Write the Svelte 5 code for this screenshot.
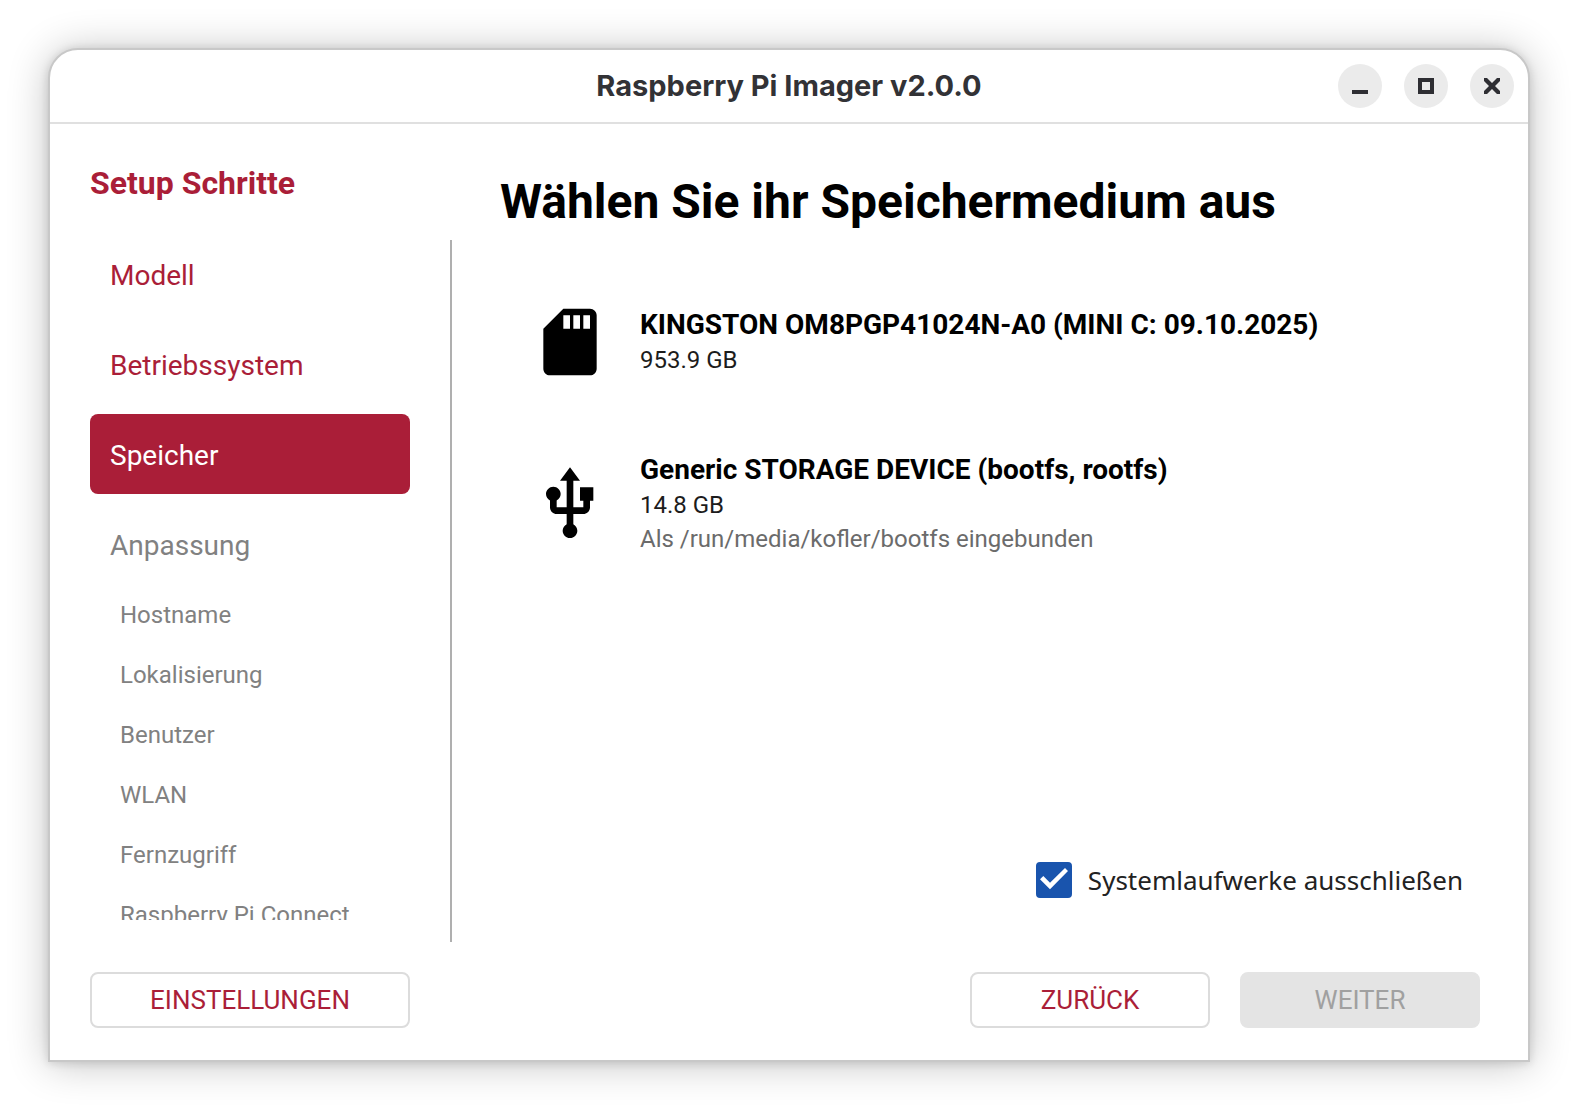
<script>
  let current = $state("Speicher");
  let excludeSystem = $state(true);

  const steps = [
    { name: "Modell", enabled: true },
    { name: "Betriebssystem", enabled: true },
    { name: "Speicher", enabled: true },
    {
      name: "Anpassung",
      enabled: false,
      children: [
        "Hostname",
        "Lokalisierung",
        "Benutzer",
        "WLAN",
        "Fernzugriff",
        "Raspberry Pi Connect",
      ],
    },
  ];

  const devices = [
    {
      icon: "sd",
      name: "KINGSTON OM8PGP41024N-A0 (MINI C: 09.10.2025)",
      size: "953.9 GB",
    },
    {
      icon: "usb",
      name: "Generic STORAGE DEVICE (bootfs, rootfs)",
      size: "14.8 GB",
      mount: "Als /run/media/kofler/bootfs eingebunden",
    },
  ];
</script>

<div class="desktop">
  <div class="window">
    <header class="titlebar">
      <h1>Raspberry Pi Imager v2.0.0</h1>
      <div class="controls">
        <button aria-label="Minimieren">
          <svg viewBox="0 0 16 16"><path d="M0 12h16v4H0z" /></svg>
        </button>
        <button aria-label="Maximieren">
          <svg viewBox="0 0 16 16"><path fill-rule="evenodd" d="M0 0h16v16H0zM4 4v8h8V4z" /></svg>
        </button>
        <button aria-label="Schließen">
          <svg viewBox="0 0 16 16">
            <path d="M0 0h3l5 5 5-5h3v3l-5 5 5 5v3h-3l-5-5-5 5H0v-3l5-5-5-5z" />
          </svg>
        </button>
      </div>
    </header>

    <div class="content">
      <aside>
        <h2>Setup Schritte</h2>
        <nav class="steps">
          {#each steps as step (step.name)}
            <button
              class="step"
              class:active={current === step.name}
              disabled={!step.enabled}
              onclick={() => (current = step.name)}
            >
              {step.name}
            </button>
            {#each step.children ?? [] as child (child)}
              <button class="substep" disabled>{child}</button>
            {/each}
          {/each}
        </nav>
        <button class="btn">EINSTELLUNGEN</button>
      </aside>

      <div class="divider"></div>

      <main>
        <h2 class="heading">Wählen Sie ihr Speichermedium aus</h2>

        <ul class="devices">
          {#each devices as device (device.name)}
            <li>
              <svg class="device-icon" viewBox="0 0 24 24" aria-hidden="true">
                {#if device.icon === "sd"}
                  <path
                    d="M18 2h-8L4 8v12c0 1.1.9 2 2 2h12c1.1 0 2-.9 2-2V4c0-1.1-.9-2-2-2zm-6 6h-2V4h2v4zm3 0h-2V4h2v4zm3 0h-2V4h2v4z"
                  />
                {:else}
                  <path
                    d="M15 7v4h1v2h-3V5h2l-3-4-3 4h2v8H8v-2.07c.7-.37 1.2-1.08 1.2-1.93 0-1.21-.99-2.2-2.2-2.2-1.21 0-2.2.99-2.2 2.2 0 .85.5 1.56 1.2 1.93V13c0 1.11.89 2 2 2h3v3.05c-.71.37-1.2 1.1-1.2 1.95 0 1.22.99 2.2 2.2 2.2s2.2-.98 2.2-2.2c0-.85-.49-1.58-1.2-1.95V15h3c1.11 0 2-.89 2-2v-2h1V7h-4z"
                  />
                {/if}
              </svg>
              <div>
                <div class="name">{device.name}</div>
                <div class="size">{device.size}</div>
                {#if device.mount}
                  <div class="mount">{device.mount}</div>
                {/if}
              </div>
            </li>
          {/each}
        </ul>

        <label class="filter">
          <span class="check">
            <input type="checkbox" bind:checked={excludeSystem} />
            {#if excludeSystem}
              <svg viewBox="0 0 36 36" aria-hidden="true">
                <path d="M4 17.3 7.3 14l6.7 6.8L29 6l3 3-18 18.3z" />
              </svg>
            {/if}
          </span>
          Systemlaufwerke ausschließen
        </label>

        <div class="actions">
          <button class="btn">ZURÜCK</button>
          <button class="btn" disabled>WEITER</button>
        </div>
      </main>
    </div>
  </div>
</div>

<style>
  :global(body) {
    margin: 0;
    background: #fff;
  }

  h1, h2, ul {
    margin: 0;
    padding: 0;
  }

  button {
    border: none;
    padding: 0;
    font-family: Roboto, sans-serif;
    cursor: pointer;
  }

  .desktop {
    box-sizing: border-box;
    height: 100vh;
    padding: 48px;
    font-family: Roboto, sans-serif;
  }

  .window {
    box-sizing: border-box;
    display: flex;
    flex-direction: column;
    height: 100%;
    border: 2px solid #c8c8c8;
    border-radius: 30px 30px 0 0;
    background: #fff;
    box-shadow: 0 1px 10px rgba(0, 0, 0, 0.14), 0 2px 40px rgba(0, 0, 0, 0.24);
  }

  .titlebar {
    display: grid;
    grid-template-columns: 1fr auto 1fr;
    align-items: center;
    height: 72px;
    padding: 0 14px;
    border-bottom: 2px solid #e0e0e0;
  }

  h1 {
    grid-column: 2;
    font: 700 29px/36px Inter, sans-serif;
    color: #323236;
  }

  .controls {
    display: flex;
    justify-content: flex-end;
    gap: 22px;
  }

  .controls button {
    display: grid;
    place-items: center;
    width: 44px;
    height: 44px;
    border-radius: 50%;
    background: #ebebeb;
  }

  .controls svg {
    width: 16px;
    height: 16px;
    fill: #2e2e33;
  }

  .content {
    display: flex;
    flex: 1;
    min-height: 0;
  }

  aside {
    display: flex;
    flex-direction: column;
    width: 320px;
    padding: 40px 40px 32px;
  }

  aside h2 {
    margin-bottom: 32px;
    font-size: 32px;
    line-height: 38px;
    color: #aa1e38;
  }

  .steps {
    display: flex;
    flex: 1;
    flex-direction: column;
    min-height: 0;
    margin-bottom: 52px;
    overflow: hidden;
  }

  .step {
    flex: none;
    height: 80px;
    margin-bottom: 10px;
    padding: 2px 20px 0;
    border-radius: 8px;
    background: none;
    font-size: 28px;
    text-align: left;
    color: #aa1e38;
  }

  .step.active {
    background: #aa1e38;
    color: #fff;
  }

  .step:disabled {
    margin-bottom: 0;
    color: #818181;
    cursor: default;
  }

  .substep {
    flex: none;
    height: 60px;
    padding: 2px 30px 0;
    background: none;
    font-size: 24px;
    text-align: left;
    color: #818181;
    cursor: default;
  }

  .divider {
    width: 2px;
    margin: 116px 0 118px;
    background: #afafaf;
  }

  main {
    display: flex;
    flex: 1;
    flex-direction: column;
    padding: 50px 48px 32px;
  }

  .heading {
    margin-bottom: 72px;
    font-size: 48px;
    line-height: 56px;
    color: #000;
  }

  .devices {
    display: flex;
    flex: 1;
    flex-direction: column;
    gap: 70px;
    min-height: 0;
    padding: 0 30px;
    list-style: none;
  }

  .devices li {
    display: flex;
    align-items: center;
    gap: 30px;
  }

  .device-icon {
    flex: none;
    width: 80px;
    height: 80px;
  }

  .name {
    font-size: 28px;
    font-weight: 700;
    line-height: 36px;
    color: #000;
  }

  .size, .mount {
    font-size: 24px;
    line-height: 34px;
    color: #1c1c1c;
  }

  .mount {
    color: #6b6b6b;
  }

  .filter {
    display: flex;
    align-self: flex-end;
    align-items: center;
    gap: 16px;
    margin-bottom: 74px;
    padding-right: 17px;
    font: 26px/36px "Noto Sans", sans-serif;
    color: #222;
  }

  .check {
    display: grid;
    width: 36px;
    height: 36px;
  }

  .check input, .check svg {
    grid-area: 1 / 1;
    width: 36px;
    height: 36px;
    margin: 0;
  }

  .check input {
    appearance: none;
    box-sizing: border-box;
    border: 2px solid #1954ad;
    border-radius: 4px;
  }

  .check input:checked {
    background: #1954ad;
  }

  .check svg {
    fill: #fff;
    pointer-events: none;
  }

  .actions {
    display: flex;
    justify-content: flex-end;
    gap: 30px;
  }

  .actions .btn {
    width: 240px;
  }

  .btn {
    box-sizing: border-box;
    height: 56px;
    border: 2px solid #dcdcdc;
    border-radius: 8px;
    background: #fff;
    font-size: 26px;
    color: #aa1e38;
  }

  .btn:disabled {
    border-color: #e4e4e4;
    background: #e4e4e4;
    color: #a0a0a0;
    cursor: default;
  }
</style>
